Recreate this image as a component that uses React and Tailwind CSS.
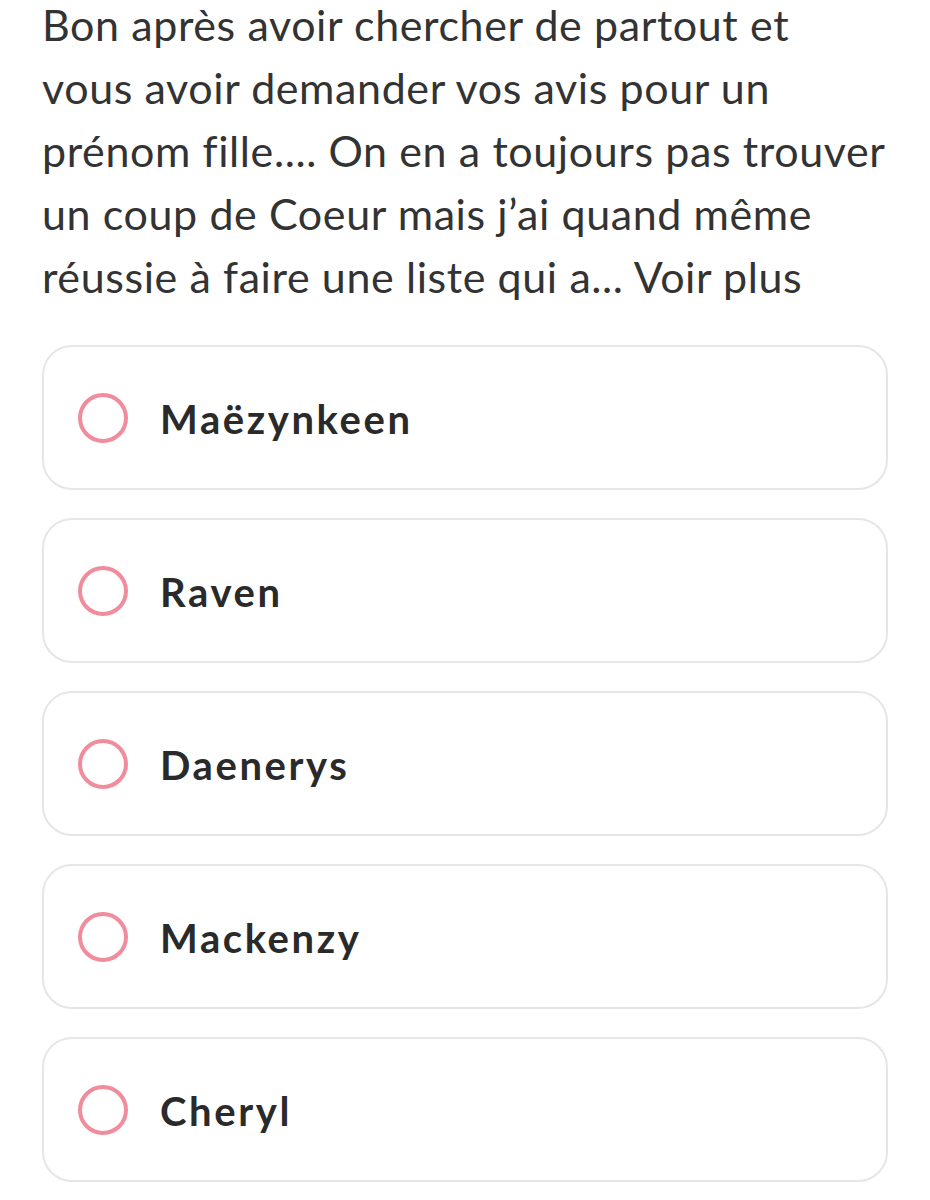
import React from 'react';

const names = ['Maëzynkeen', 'Raven', 'Daenerys', 'Mackenzy', 'Cheryl'];

const lines = [
  'Bon après avoir chercher de partout et',
  'vous avoir demander vos avis pour un',
  'prénom fille.... On en a toujours pas trouver',
  'un coup de Coeur mais j’ai quand même',
  'réussie à faire une liste qui a... Voir plus',
];

const Option = ({ label }) => (
  <div className="flex items-center h-[145px] rounded-[30px] border-2 border-[#e6e6e6] bg-white pl-[34px]">
    <span className="w-[50px] h-[50px] rounded-full border-[4px] border-[#f08c9c] shrink-0" />
    <span className="ml-[32px] text-[40px] tracking-[2.6px] font-bold text-[#2a2a2a] leading-none pt-[3px]">{label}</span>
  </div>
);

export default function App() {
  return (
    <div className="w-[930px] h-[1200px] bg-white overflow-hidden px-[42px] font-['Lato','Open_Sans',sans-serif]">
      <p className="text-[43px] tracking-[0.6px] leading-[63px] text-[#333333] whitespace-nowrap -mt-[7px]">
        {lines.map((l, i) => (
          <span key={i} className="block">{l}</span>
        ))}
      </p>
      <div className="mt-[37px] flex flex-col gap-[28px] w-[846px]">
        {names.map((n) => (
          <Option key={n} label={n} />
        ))}
      </div>
    </div>
  );
}
